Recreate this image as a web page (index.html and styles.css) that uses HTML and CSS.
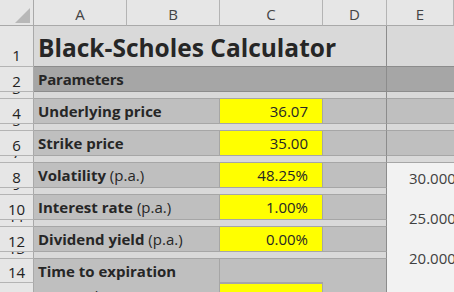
FILE: index.html
```html
<!DOCTYPE html>
<html lang="en">
<head>
  <meta charset="UTF-8">
  <title>Black-Scholes Calculator</title>
  <link rel="stylesheet" href="styles.css">
</head>
<body>

<div class="sheet">
  <!-- column headers -->
  <div class="corner">
    <svg width="15" height="15" viewBox="0 0 15 15"><polygon points="15,0 15,15 0,15" fill="#b8b8b8"/></svg>
  </div>
  <div class="ch">A</div>
  <div class="ch">B</div>
  <div class="ch">C</div>
  <div class="ch">D</div>
  <div class="ch">E</div>

  <!-- row 1 -->
  <div class="rh rh-title">1</div>
  <div class="title">Black-Scholes Calculator</div>
  <div class="e e-title"></div>

  <!-- row 2 -->
  <div class="rh">2</div>
  <div class="section">Parameters</div>
  <div class="e e-section"></div>

  <div class="rh">3</div>
  <div class="band"></div>
  <div class="e e-band"></div>

  <div class="rh">4</div>
  <div class="label"><b>Underlying price</b></div>
  <div class="input">36.07</div>
  <div class="d"></div>
  <div class="e e-gray"></div>

  <div class="rh">5</div>
  <div class="band"></div>
  <div class="e e-band"></div>

  <div class="rh">6</div>
  <div class="label"><b>Strike price</b></div>
  <div class="input">35.00</div>
  <div class="d"></div>
  <div class="e e-gray"></div>

  <div class="rh">7</div>
  <div class="band"></div>
  <div class="e e-band"></div>

  <div class="rh">8</div>
  <div class="label"><b>Volatility</b>&nbsp;(p.a.)</div>
  <div class="input">48.25%</div>
  <div class="d"></div>

  <div class="rh">9</div>
  <div class="band"></div>

  <div class="rh">10</div>
  <div class="label"><b>Interest rate</b>&nbsp;(p.a.)</div>
  <div class="input">1.00%</div>
  <div class="d"></div>

  <div class="rh">11</div>
  <div class="band"></div>

  <div class="rh">12</div>
  <div class="label"><b>Dividend yield</b>&nbsp;(p.a.)</div>
  <div class="input">0.00%</div>
  <div class="d"></div>

  <div class="rh">13</div>
  <div class="band"></div>

  <div class="rh">14</div>
  <div class="label label-open"><b>Time to expiration</b></div>
  <div class="c-gray"></div>
  <div class="d d-open"></div>

  <div class="rh">15</div>
  <div class="label label-open">Pricing date</div>
  <div class="input input-box"></div>
  <div class="d d-open"></div>

  <!-- chart sitting in column E -->
  <div class="chart">
    <div class="tick">30.000</div>
    <div class="tick">25.000</div>
    <div class="tick">20.000</div>
  </div>
</div>

</body>
</html>
```

FILE: styles.css
```css
html, body {
  margin: 0;
  overflow: hidden;
}

body {
  font-family: "Open Sans", "Noto Sans", sans-serif;
  color: #262626;
  background: #fff;
}

.sheet {
  display: grid;
  grid-template-columns: 34px 93px 93px 103px 64px 1fr;
  grid-template-rows: 26px 41px 25px 7px 25px 7px 25px 7px 25px 7px 25px 7px 25px 7px 24px 25px;
  width: 454px;
  height: 292px;
  overflow: hidden;
}

.sheet > div {
  box-sizing: border-box;
  overflow: hidden;
  white-space: nowrap;
}

/* headers */
.corner {
  background: #e6e6e6;
  border-right: 1px solid #a9a9a9;
  border-bottom: 1px solid #a9a9a9;
  display: flex;
  justify-content: flex-end;
  align-items: flex-end;
  padding: 0 3px 2px 0;
}

.ch {
  background: #e6e6e6;
  border-right: 1px solid #b4b4b4;
  border-bottom: 1px solid #a9a9a9;
  display: flex;
  align-items: center;
  justify-content: center;
  font-size: 15px;
  color: #444;
  padding-top: 3px;
}

.rh {
  background: #e6e6e6;
  border-right: 1px solid #a9a9a9;
  border-bottom: 1px solid #b4b4b4;
  display: flex;
  align-items: flex-end;
  justify-content: center;
  font-size: 15px;
  line-height: 20px;
  color: #222;
}

.rh-title {
  padding-bottom: 1px;
}

/* cells */
.title {
  grid-column: span 4;
  background: #d9d9d9;
  border-right: 1px solid #8c8c8c;
  border-bottom: 1px solid #8c8c8c;
  font-size: 24.5px;
  font-weight: 700;
  display: flex;
  align-items: center;
  padding: 3px 0 0 4px;
}

.section {
  grid-column: span 4;
  background: #a6a6a6;
  border-right: 1px solid #8c8c8c;
  border-bottom: 1px solid #8c8c8c;
  font-size: 15px;
  font-weight: 700;
  letter-spacing: -0.2px;
  display: flex;
  align-items: center;
  padding-left: 4px;
}

.band {
  grid-column: span 4;
  background: #d9d9d9;
  border-right: 1px solid #8c8c8c;
  border-bottom: 1px solid #a6a6a6;
}

.label {
  grid-column: span 2;
  background: #bfbfbf;
  border-right: 1px solid #a6a6a6;
  border-bottom: 1px solid #a6a6a6;
  font-size: 15px;
  display: flex;
  align-items: center;
  padding-left: 4px;
}

.label b {
  font-weight: 700;
}

.label-open {
  border-bottom: none;
}

.input {
  background: #ffff00;
  border-right: 1px solid #a6a6a6;
  border-bottom: 1px solid #a6a6a6;
  font-size: 15px;
  display: flex;
  align-items: center;
  justify-content: flex-end;
  padding-right: 14px;
}

.input-box {
  border-top: 1px solid #a6a6a6;
}

.c-gray {
  background: #bfbfbf;
  border-bottom: 1px solid #a6a6a6;
}

.d {
  background: #bfbfbf;
  border-right: 1px solid #8c8c8c;
  border-bottom: 1px solid #a6a6a6;
}

.d-open {
  border-bottom: none;
}

/* column E */
.e {
  border-bottom: 1px solid #a6a6a6;
}

.e-title {
  background: #d9d9d9;
  border-bottom-color: #8c8c8c;
}

.e-section {
  background: #a6a6a6;
  border-bottom-color: #8c8c8c;
}

.e-band {
  background: #d9d9d9;
}

.e-gray {
  background: #bfbfbf;
}

.chart {
  grid-column: 6;
  grid-row: 9 / span 8;
  background: #f2f2f2;
  display: flex;
  flex-direction: column;
  gap: 20px;
  padding: 5px 0 0 22px;
}

.tick {
  font-size: 15px;
  line-height: 20px;
  color: #404040;
}
```
